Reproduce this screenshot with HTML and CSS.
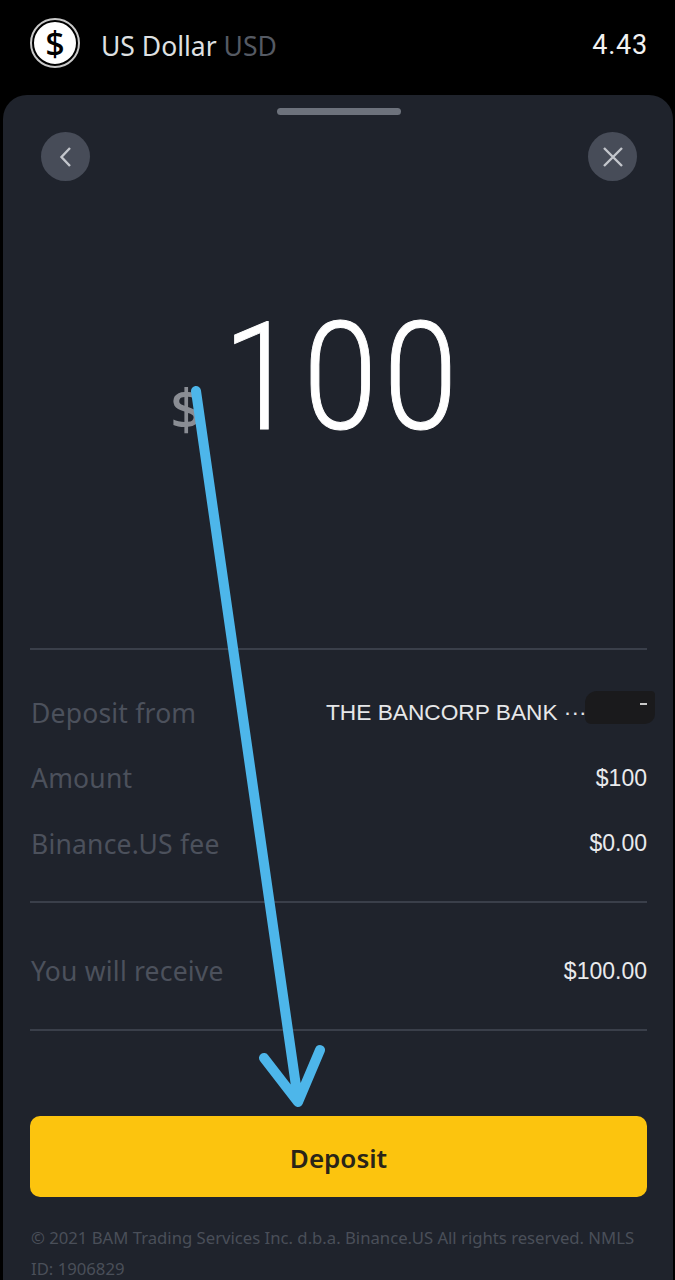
FILE: index.html
```html
<!DOCTYPE html>
<html lang="en">
<head>
    <meta charset="UTF-8">
    <meta name="viewport" content="width=device-width, initial-scale=1.0">
    <title>Deposit</title>
    <link rel="stylesheet" href="styles.css">
</head>
<body>
    <div class="page">
        <div class="asset">
            <div class="coin">$</div>
            <div class="asset-name">US Dollar <span class="asset-code">USD</span></div>
            <div class="asset-balance">4.43</div>
        </div>

        <div class="sheet">
            <div class="handle"></div>
            <div class="nav">
                <div class="round-btn">
                    <svg width="22" height="22" viewBox="0 0 22 22"><path d="M15 2 6.500 11 15 20" fill="none" stroke="#c3c6cc" stroke-width="2.400"/></svg>
                </div>
                <div class="round-btn">
                    <svg width="22" height="22" viewBox="0 0 22 22"><path d="M2 2l18 18M20 2 2 20" fill="none" stroke="#c3c6cc" stroke-width="2.400"/></svg>
                </div>
            </div>

            <div class="amount">
                <span class="amount-sign">$</span>
                <span class="amount-value">100</span>
            </div>

            <div class="rows">
                <div class="row"><span class="row-label">Deposit from</span><span class="row-bank">THE BANCORP BANK ···</span></div>
                <div class="row"><span class="row-label">Amount</span><span class="row-value">$100</span></div>
                <div class="row"><span class="row-label">Binance.US fee</span><span class="row-value">$0.00</span></div>
            </div>
            <div class="rows rows-total">
                <div class="row"><span class="row-label">You will receive</span><span class="row-value">$100.00</span></div>
            </div>

            <button type="button" class="deposit">Deposit</button>
            <p class="legal">© 2021 BAM Trading Services Inc. d.b.a. Binance.US All rights reserved. NMLS ID: 1906829</p>
        </div>

        <!-- scribble and arrow drawn on top of the screenshot -->
        <div class="scribble"></div>
        <svg class="arrow" width="675" height="1280" viewBox="0 0 675 1280">
            <path d="M196 391 298 1100M264 1058 298 1102 320 1050" fill="none" stroke="#4db6ea" stroke-width="10" stroke-linecap="round" stroke-linejoin="round"/>
        </svg>
    </div>
</body>
</html>
```

FILE: styles.css
```css
body {
    margin: 0;
    background-color: #000;
    font-family: "Noto Sans", sans-serif;
}
.page {
    position: relative;
    width: 675px;
    height: 1280px;
    overflow: hidden;
    background-color: #000;
}
.asset {
    display: flex;
    align-items: center;
    height: 95px;
    box-sizing: border-box;
    padding: 0 27px 3px 30px;
}
.coin {
    display: flex;
    align-items: center;
    justify-content: center;
    width: 42px;
    height: 42px;
    margin: 2px 2px 8px;
    border: 2px solid #000;
    border-radius: 50%;
    outline: 2px solid #c9c9c9;
    background-color: #fff;
    color: #000;
    font-size: 34px;
    font-weight: 500;
}
.asset-name {
    margin-left: 21px;
    color: #dfe0e2;
    font-size: 26.500px;
}
.asset-code {
    color: #555a63;
}
.asset-balance {
    margin-left: auto;
    margin-bottom: 3px;
    color: #f2f2f2;
    font-family: Roboto, sans-serif;
    font-size: 27px;
    letter-spacing: 0.8px;
}
.sheet {
    margin: 0 2px 0 3px;
    padding: 0 26px 0 27px;
    height: 1185px;
    box-sizing: border-box;
    background-color: #1f232c;
    border-radius: 24px 24px 0 0;
}
.handle {
    width: 124px;
    height: 7px;
    margin: 0 auto;
    position: relative;
    top: 13px;
    background-color: #6d727c;
    border-radius: 4px;
}
.nav {
    display: flex;
    justify-content: space-between;
    padding: 30px 10px 0 11px;
}
.round-btn {
    display: flex;
    align-items: center;
    justify-content: center;
    width: 49px;
    height: 49px;
    border-radius: 50%;
    background-color: #474c58;
}
.amount {
    display: flex;
    align-items: flex-end;
    justify-content: center;
    height: 168px;
    margin-top: 113px;
    padding-right: 28px;
}
.amount-sign {
    margin-right: 6px;
    margin-bottom: 27px;
    color: #8a8d94;
    font-size: 56px;
    line-height: 1;
    font-weight: 500;
}
.amount-value {
    color: #fff;
    font-family: Roboto, sans-serif;
    font-weight: 300;
    font-size: 150px;
    line-height: 168px;
    letter-spacing: 7px;
    transform: scaleX(0.89);
    -webkit-text-stroke: 1px #fff;
}
.rows {
    margin-top: 186px;
    padding: 30px 0 24px;
    border-top: 2px solid #3a3f4a;
}
.rows-total {
    margin-top: 0;
    padding: 36px 0 25px;
    border-bottom: 2px solid #3a3f4a;
}
.row {
    display: flex;
    align-items: center;
    justify-content: space-between;
    height: 65.500px;
}
.rows-total .row {
    height: 65px;
}
.row-label {
    margin-left: 1px;
    color: #4c515c;
    font-size: 26.500px;
    letter-spacing: 0.2px;
}
.row-bank {
    width: 321px;
    color: #e6e7e9;
    font-family: "Liberation Sans", sans-serif;
    font-size: 22.700px;
    white-space: nowrap;
}
.row-value {
    color: #e9eaec;
    font-family: "Liberation Sans", sans-serif;
    font-size: 23px;
}
.deposit {
    display: block;
    width: 100%;
    height: 81px;
    margin-top: 85px;
    padding-top: 4px;
    border: 0;
    border-radius: 10px;
    background-color: #fcc40e;
    color: #2a2418;
    font-family: "Noto Sans", sans-serif;
    font-size: 26px;
    font-weight: 600;
}
.legal {
    margin: 25px 0 0 1px;
    color: #4a4f59;
    font-size: 16.700px;
    line-height: 31px;
}
.scribble {
    position: absolute;
    left: 585px;
    top: 691px;
    width: 70px;
    height: 33px;
    background-color: #1a1a1c;
    border-radius: 12px 4px 10px 6px;
}
.scribble::after {
    content: "";
    position: absolute;
    left: 55px;
    top: 12px;
    width: 7px;
    height: 2px;
    background-color: #c9c9c9;
}
.arrow {
    position: absolute;
    left: 0;
    top: 0;
}
```
